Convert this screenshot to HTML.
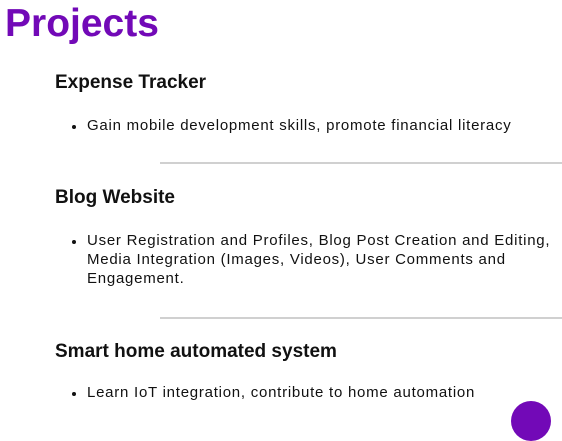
<!DOCTYPE html>
<html><head><style>
body{margin:0;width:562px;height:431px;overflow:hidden;background:#fff;font-family:"Liberation Sans",sans-serif;color:#111;position:relative}
.a{position:absolute;white-space:nowrap}
h1{position:absolute;left:5px;top:2px;margin:0;font-size:39px;font-weight:bold;color:#7209b7}
.h{left:55px;font-size:19px;font-weight:bold}
.t{left:87px;font-size:15px;line-height:19px;letter-spacing:0.75px}
.d{position:absolute;left:72px;width:4px;height:4px;border-radius:50%;background:#111}
.hr{position:absolute;left:160px;width:402px;height:2px;background:#d0d0d0}
.c{position:absolute;left:511px;top:401px;width:40px;height:40px;border-radius:50%;background:#7209b7}
</style></head><body>
<h1>Projects</h1>
<div class="a h" style="top:72px">Expense Tracker</div>
<div class="d" style="top:125px"></div>
<div class="a t" style="top:116px">Gain mobile development skills, promote financial literacy</div>
<div class="hr" style="top:162px"></div>
<div class="a h" style="top:187px">Blog Website</div>
<div class="d" style="top:240px"></div>
<div class="a t" style="top:231px">User Registration and Profiles, Blog Post Creation and Editing,<br>Media Integration (Images, Videos), User Comments and<br>Engagement.</div>
<div class="hr" style="top:317px"></div>
<div class="a h" style="top:341px">Smart home automated system</div>
<div class="d" style="top:392px"></div>
<div class="a t" style="top:383px">Learn IoT integration, contribute to home automation</div>
<div class="c"></div>
</body></html>
